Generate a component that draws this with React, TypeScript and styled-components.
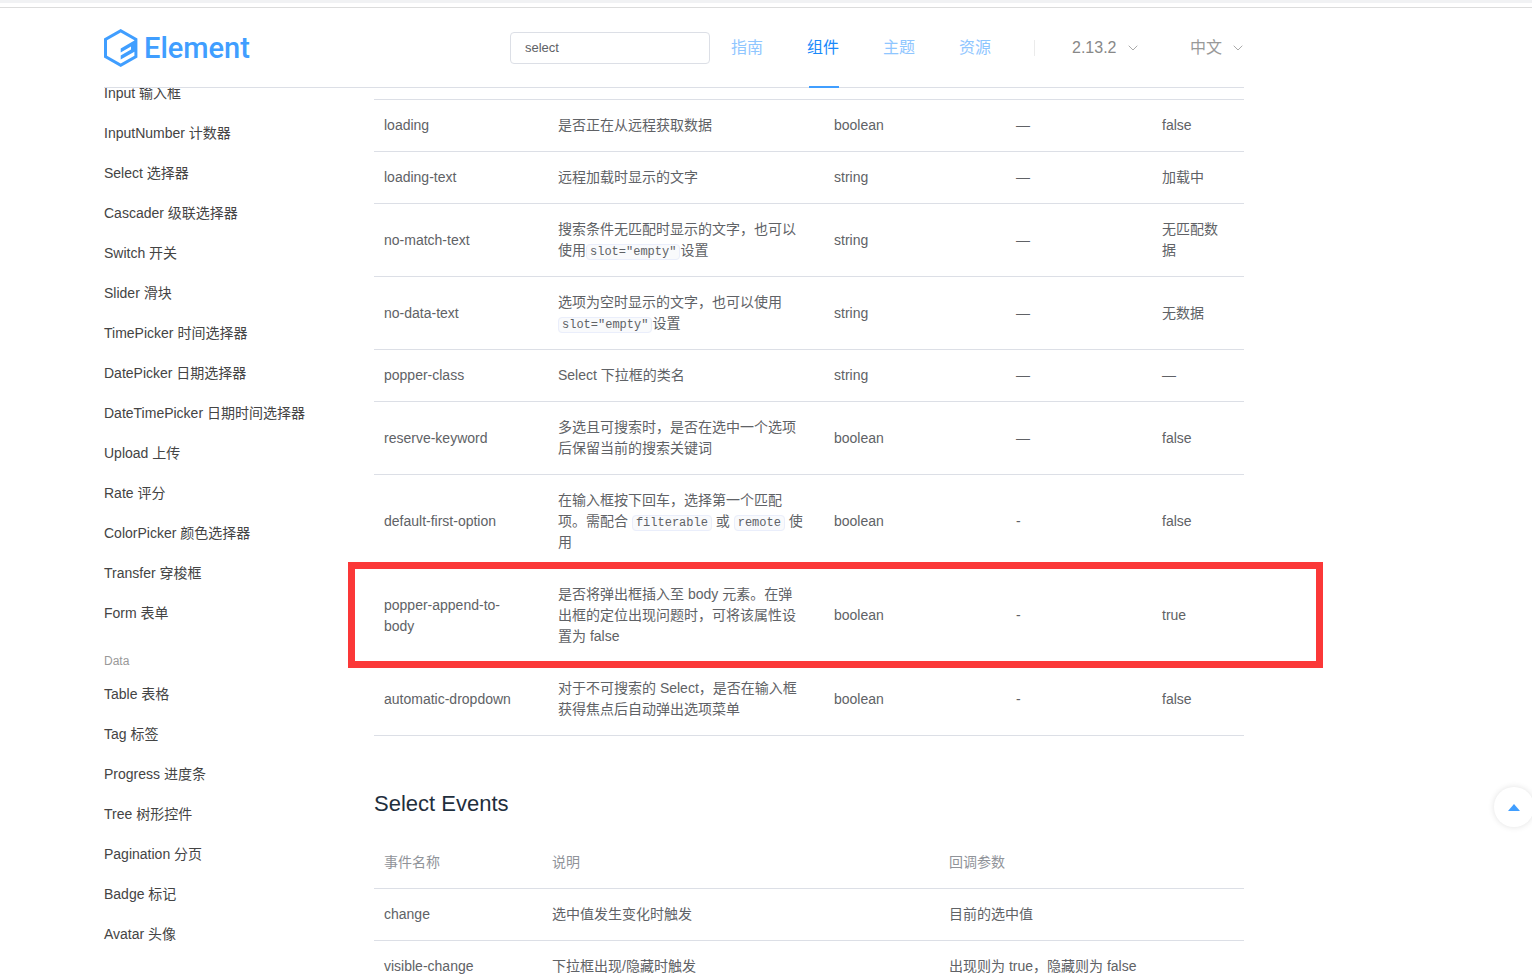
import React from 'react';
import styled, { createGlobalStyle } from 'styled-components';

const GlobalStyle = createGlobalStyle`
  *, *::before, *::after { box-sizing: border-box; }
  body {
    margin: 0;
    background: #fff;
    color: #606266;
    font-family: "Liberation Sans", "Noto Sans CJK SC", sans-serif;
    font-size: 14px;
  }
`;

const Page = styled.div`
  height: 100vh;
  overflow: hidden;
`;

const BrowserEdge = styled.div`
  height: 8px;
  border-top: 3px solid #f1f2f4;
  border-bottom: 1px solid #dcdcdc;
`;

const Container = styled.div`
  max-width: 1244px;
  padding-left: 104px;
`;

const Header = styled.header`
  position: relative;
  z-index: 1;
  display: flex;
  align-items: center;
  height: 80px;
  padding-right: 1px;
  border-bottom: 1px solid #dcdfe6;
  background: #fff;
`;

const Logo = styled.a`
  display: flex;
  align-items: center;
  gap: 6px;
  margin-right: auto;
  color: #409eff;
  font: 500 29px/38px Roboto, sans-serif;
  text-decoration: none;
`;

const SearchInput = styled.input`
  width: 200px;
  height: 32px;
  padding: 0 14px;
  border: 1px solid #dcdfe6;
  border-radius: 4px;
  outline: none;
  color: #606266;
  font: 13px "Liberation Sans", sans-serif;
`;

const Nav = styled.nav`
  display: flex;
  align-self: stretch;
  gap: 44px;
  margin: 0 43px 0 21px;
`;

const NavLink = styled.a<{ $active?: boolean }>`
  position: relative;
  color: ${(p) => (p.$active ? '#1989fa' : '#8fc6ff')};
  font-size: 16px;
  line-height: 80px;
  text-decoration: none;

  &::after {
    content: '';
    display: ${(p) => (p.$active ? 'block' : 'none')};
    position: absolute;
    left: 2px;
    bottom: -1px;
    width: 30px;
    height: 2px;
    background: #409eff;
  }
`;

const Divider = styled.span`
  width: 1px;
  height: 16px;
  background: #ebebeb;
`;

const Picker = styled.span<{ $gap: number; $width: number; $tone: string }>`
  position: relative;
  display: flex;
  align-items: center;
  width: ${(p) => p.$width}px;
  margin-left: ${(p) => p.$gap}px;
  color: ${(p) => p.$tone};

  select {
    width: 100%;
    height: 24px;
    padding: 0;
    border: 0;
    outline: none;
    appearance: none;
    background: none;
    color: inherit;
    font: 16px/24px "Liberation Sans", "Noto Sans CJK SC", sans-serif;
  }

  svg {
    position: absolute;
    right: 0;
    pointer-events: none;
  }
`;

const Columns = styled.div`
  display: flex;
`;

const Sidebar = styled.nav`
  flex: 0 0 270px;
  margin-top: -15px;
`;

const MenuList = styled.ul`
  margin: 0;
  padding: 0;
  list-style: none;
`;

const MenuLink = styled.a`
  display: block;
  color: #444;
  line-height: 40px;
  text-decoration: none;
`;

const GroupTitle = styled.div`
  margin-top: 15px;
  color: #999;
  font-size: 12px;
  line-height: 26px;
`;

const Content = styled.main`
  flex: 1;
  min-width: 0;
  padding-top: 11px;
`;

const DataTable = styled.table<{ $ruled?: boolean }>`
  width: 100%;
  table-layout: fixed;
  border-spacing: 0;
  border-top: ${(p) => (p.$ruled ? '1px solid #dcdfe6' : '0')};
  line-height: 21px;
  text-align: left;
`;

const Column = styled.col<{ $width?: number }>`
  width: ${(p) => (p.$width ? `${p.$width}px` : 'auto')};
`;

const HeadCell = styled.th`
  padding: 15px;
  border-bottom: 1px solid #dcdfe6;
  color: #909399;
  font-weight: 400;

  &:first-child { padding-left: 10px; }
`;

const Cell = styled.td`
  padding: 15px;
  border-bottom: 1px solid #dcdfe6;

  &:first-child { padding-left: 10px; }
`;

const Row = styled.tr`
  position: relative;
`;

const Highlight = styled.span`
  position: absolute;
  inset: -7px -79px -5px -26px;
  border: 7px solid #fb3838;
  pointer-events: none;
`;

const Code = styled.code`
  padding: 0 3px;
  border: 1px solid #eaeefb;
  border-radius: 4px;
  background: #f9fafc;
  font: 12px "Liberation Mono", monospace;
  white-space: nowrap;
`;

const SectionTitle = styled.h3`
  margin: 55px 0 20px;
  color: #1f2f3d;
  font-size: 22px;
  font-weight: 400;
  line-height: 26px;
`;

const BackToTop = styled.button`
  position: fixed;
  right: -2px;
  bottom: 150px;
  display: flex;
  align-items: center;
  justify-content: center;
  width: 40px;
  height: 40px;
  padding: 0;
  border: 0;
  border-radius: 50%;
  background: #fff;
  box-shadow: 0 0 6px rgba(0, 0, 0, 0.12);
`;

const Chevron = () => (
  <svg width="10" height="6" viewBox="0 0 10 6" fill="none" stroke="#aaa" aria-hidden="true">
    <path d="M0.7 0.7 5 5 9.3 0.7" />
  </svg>
);

const LogoMark = () => (
  <svg width="34" height="38" viewBox="0 0 34 38" aria-hidden="true">
    <path
      fill="#409eff"
      fillRule="evenodd"
      d="M16.7 0 33.4 9.4V28.6L16.7 38 0 28.6V9.4ZM16.7 3.6 3 11.3V26.7L16.7 34.4 30.4 26.7V22.8L16.7 30.6V26.6L27 20.6V17.6L16.7 23.6V19.6L30.4 11.6V11.3Z"
    />
  </svg>
);

const formItems = [
  'Input 输入框', 'InputNumber 计数器', 'Select 选择器', 'Cascader 级联选择器', 'Switch 开关',
  'Slider 滑块', 'TimePicker 时间选择器', 'DatePicker 日期选择器', 'DateTimePicker 日期时间选择器',
  'Upload 上传', 'Rate 评分', 'ColorPicker 颜色选择器', 'Transfer 穿梭框', 'Form 表单',
];

const dataItems = [
  'Table 表格', 'Tag 标签', 'Progress 进度条', 'Tree 树形控件', 'Pagination 分页', 'Badge 标记', 'Avatar 头像',
];

type Attribute = {
  name: string;
  description: React.ReactNode;
  type: string;
  options: string;
  initial: string;
  highlighted?: boolean;
};

const attributes: Attribute[] = [
  { name: 'loading', description: '是否正在从远程获取数据', type: 'boolean', options: '—', initial: 'false' },
  { name: 'loading-text', description: '远程加载时显示的文字', type: 'string', options: '—', initial: '加载中' },
  {
    name: 'no-match-text',
    description: <>搜索条件无匹配时显示的文字，也可以使用<Code>slot="empty"</Code>设置</>,
    type: 'string', options: '—', initial: '无匹配数据',
  },
  {
    name: 'no-data-text',
    description: <>选项为空时显示的文字，也可以使用<Code>slot="empty"</Code>设置</>,
    type: 'string', options: '—', initial: '无数据',
  },
  { name: 'popper-class', description: 'Select 下拉框的类名', type: 'string', options: '—', initial: '—' },
  {
    name: 'reserve-keyword',
    description: '多选且可搜索时，是否在选中一个选项后保留当前的搜索关键词',
    type: 'boolean', options: '—', initial: 'false',
  },
  {
    name: 'default-first-option',
    description: <>在输入框按下回车，选择第一个匹配项。需配合 <Code>filterable</Code> 或 <Code>remote</Code> 使用</>,
    type: 'boolean', options: '-', initial: 'false',
  },
  {
    name: 'popper-append-to-body',
    description: '是否将弹出框插入至 body 元素。在弹出框的定位出现问题时，可将该属性设置为 false',
    type: 'boolean', options: '-', initial: 'true', highlighted: true,
  },
  {
    name: 'automatic-dropdown',
    description: '对于不可搜索的 Select，是否在输入框获得焦点后自动弹出选项菜单',
    type: 'boolean', options: '-', initial: 'false',
  },
];

const events = [
  ['change', '选中值发生变化时触发', '目前的选中值'],
  ['visible-change', '下拉框出现/隐藏时触发', '出现则为 true，隐藏则为 false'],
];

const Menu = ({ items }: { items: string[] }) => (
  <MenuList>
    {items.map((item) => (
      <li key={item}><MenuLink href="#">{item}</MenuLink></li>
    ))}
  </MenuList>
);

export default function App() {
  return (
    <Page>
      <GlobalStyle />
      <BrowserEdge />
      <Container>
        <Header>
          <Logo href="#"><LogoMark />Element</Logo>
          <SearchInput type="text" aria-label="搜索" defaultValue="select" />
          <Nav>
            <NavLink href="#">指南</NavLink>
            <NavLink href="#" $active>组件</NavLink>
            <NavLink href="#">主题</NavLink>
            <NavLink href="#">资源</NavLink>
          </Nav>
          <Divider />
          <Picker $gap={37} $width={66} $tone="#888">
            <select aria-label="版本"><option>2.13.2</option></select>
            <Chevron />
          </Picker>
          <Picker $gap={52} $width={53} $tone="#999">
            <select aria-label="语言"><option>中文</option></select>
            <Chevron />
          </Picker>
        </Header>
        <Columns>
          <Sidebar>
            <Menu items={formItems} />
            <GroupTitle>Data</GroupTitle>
            <Menu items={dataItems} />
          </Sidebar>
          <Content>
            <DataTable $ruled>
              <colgroup>
                <Column $width={169} />
                <Column $width={276} />
                <Column $width={182} />
                <Column />
                <Column $width={97} />
              </colgroup>
              <tbody>
                {attributes.map((a) => (
                  <Row key={a.name}>
                    <Cell>{a.name}{a.highlighted && <Highlight />}</Cell>
                    <Cell>{a.description}</Cell>
                    <Cell>{a.type}</Cell>
                    <Cell>{a.options}</Cell>
                    <Cell>{a.initial}</Cell>
                  </Row>
                ))}
              </tbody>
            </DataTable>
            <SectionTitle>Select Events</SectionTitle>
            <DataTable>
              <colgroup>
                <Column $width={163} />
                <Column $width={397} />
                <Column />
              </colgroup>
              <thead>
                <tr>
                  <HeadCell>事件名称</HeadCell>
                  <HeadCell>说明</HeadCell>
                  <HeadCell>回调参数</HeadCell>
                </tr>
              </thead>
              <tbody>
                {events.map((cells) => (
                  <tr key={cells[0]}>
                    {cells.map((text) => <Cell key={text}>{text}</Cell>)}
                  </tr>
                ))}
              </tbody>
            </DataTable>
          </Content>
        </Columns>
      </Container>
      <BackToTop type="button" aria-label="回到顶部">
        <svg width="12" height="7" viewBox="0 0 12 7" aria-hidden="true">
          <path d="M6 0 12 7H0Z" fill="#409eff" />
        </svg>
      </BackToTop>
    </Page>
  );
}
